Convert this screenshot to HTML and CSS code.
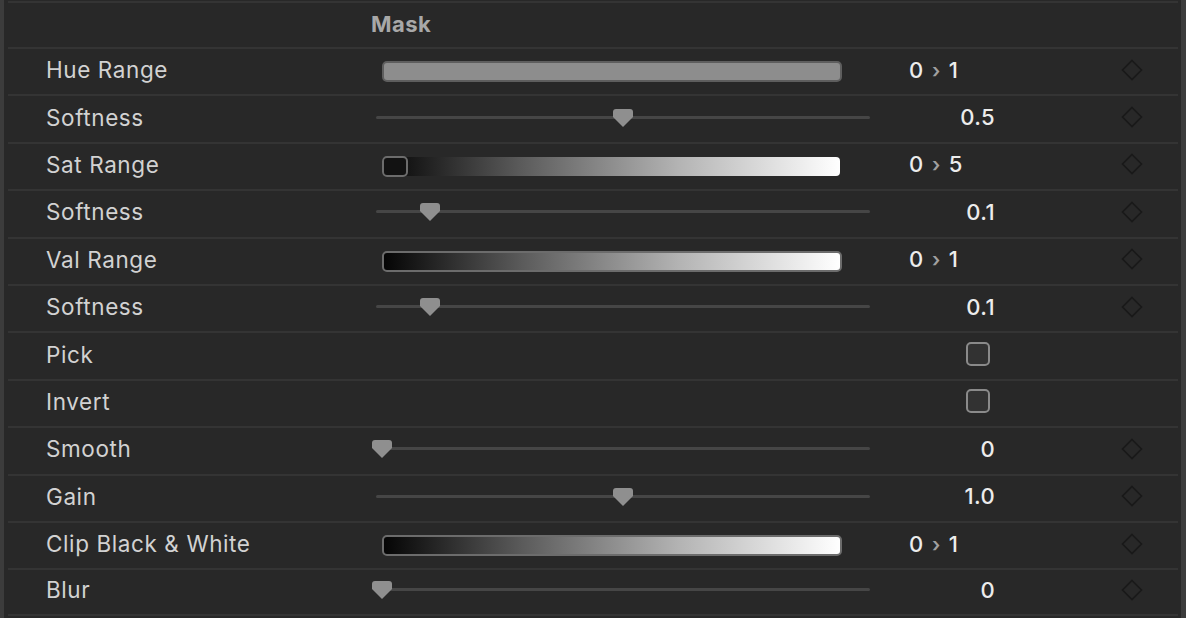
FILE: index.html
```html
<!DOCTYPE html>
<html lang="en">
<head>
    <meta charset="UTF-8">
    <title>Mask</title>
    <link rel="stylesheet" href="styles.css">
</head>
<body>

<div class="panel">
    <div class="header">Mask</div>

    <div class="row">
        <div class="label">Hue Range</div>
        <div class="control"><div class="range range-hue"></div></div>
        <div class="value range-value">0 <span class="arrow">›</span> 1</div>
        <div></div>
        <svg class="key" width="22" height="22" viewBox="0 0 22 22"><path d="M11 1.5 L20.5 11 L11 20.5 L1.5 11 Z"/></svg>
    </div>

    <div class="row">
        <div class="label">Softness</div>
        <div class="control">
            <div class="slider">
                <svg class="thumb" style="left: 237px" width="20" height="18" viewBox="0 0 20 18"><path d="M3 0 H17 Q20 0 20 3 V8 L10 18 L0 8 V3 Q0 0 3 0 Z"/></svg>
            </div>
        </div>
        <div class="value">0.5</div>
        <div></div>
        <svg class="key" width="22" height="22" viewBox="0 0 22 22"><path d="M11 1.5 L20.5 11 L11 20.5 L1.5 11 Z"/></svg>
    </div>

    <div class="row">
        <div class="label">Sat Range</div>
        <div class="control">
            <div class="range-sat">
                <div class="sat-strip"></div>
                <div class="sat-handle"></div>
            </div>
        </div>
        <div class="value range-value">0 <span class="arrow">›</span> 5</div>
        <div></div>
        <svg class="key" width="22" height="22" viewBox="0 0 22 22"><path d="M11 1.5 L20.5 11 L11 20.5 L1.5 11 Z"/></svg>
    </div>

    <div class="row">
        <div class="label">Softness</div>
        <div class="control">
            <div class="slider">
                <svg class="thumb" style="left: 44px" width="20" height="18" viewBox="0 0 20 18"><path d="M3 0 H17 Q20 0 20 3 V8 L10 18 L0 8 V3 Q0 0 3 0 Z"/></svg>
            </div>
        </div>
        <div class="value">0.1</div>
        <div></div>
        <svg class="key" width="22" height="22" viewBox="0 0 22 22"><path d="M11 1.5 L20.5 11 L11 20.5 L1.5 11 Z"/></svg>
    </div>

    <div class="row">
        <div class="label">Val Range</div>
        <div class="control"><div class="range range-grad"></div></div>
        <div class="value range-value">0 <span class="arrow">›</span> 1</div>
        <div></div>
        <svg class="key" width="22" height="22" viewBox="0 0 22 22"><path d="M11 1.5 L20.5 11 L11 20.5 L1.5 11 Z"/></svg>
    </div>

    <div class="row">
        <div class="label">Softness</div>
        <div class="control">
            <div class="slider">
                <svg class="thumb" style="left: 44px" width="20" height="18" viewBox="0 0 20 18"><path d="M3 0 H17 Q20 0 20 3 V8 L10 18 L0 8 V3 Q0 0 3 0 Z"/></svg>
            </div>
        </div>
        <div class="value">0.1</div>
        <div></div>
        <svg class="key" width="22" height="22" viewBox="0 0 22 22"><path d="M11 1.5 L20.5 11 L11 20.5 L1.5 11 Z"/></svg>
    </div>

    <div class="row">
        <div class="label">Pick</div>
        <div class="control"></div>
        <div class="value"><div class="checkbox"></div></div>
    </div>

    <div class="row">
        <div class="label">Invert</div>
        <div class="control"></div>
        <div class="value"><div class="checkbox"></div></div>
    </div>

    <div class="row">
        <div class="label">Smooth</div>
        <div class="control">
            <div class="slider">
                <svg class="thumb" style="left: -4px" width="20" height="18" viewBox="0 0 20 18"><path d="M3 0 H17 Q20 0 20 3 V8 L10 18 L0 8 V3 Q0 0 3 0 Z"/></svg>
            </div>
        </div>
        <div class="value">0</div>
        <div></div>
        <svg class="key" width="22" height="22" viewBox="0 0 22 22"><path d="M11 1.5 L20.5 11 L11 20.5 L1.5 11 Z"/></svg>
    </div>

    <div class="row">
        <div class="label">Gain</div>
        <div class="control">
            <div class="slider">
                <svg class="thumb" style="left: 237px" width="20" height="18" viewBox="0 0 20 18"><path d="M3 0 H17 Q20 0 20 3 V8 L10 18 L0 8 V3 Q0 0 3 0 Z"/></svg>
            </div>
        </div>
        <div class="value">1.0</div>
        <div></div>
        <svg class="key" width="22" height="22" viewBox="0 0 22 22"><path d="M11 1.5 L20.5 11 L11 20.5 L1.5 11 Z"/></svg>
    </div>

    <div class="row">
        <div class="label">Clip Black &amp; White</div>
        <div class="control"><div class="range range-grad"></div></div>
        <div class="value range-value">0 <span class="arrow">›</span> 1</div>
        <div></div>
        <svg class="key" width="22" height="22" viewBox="0 0 22 22"><path d="M11 1.5 L20.5 11 L11 20.5 L1.5 11 Z"/></svg>
    </div>

    <div class="row last">
        <div class="label">Blur</div>
        <div class="control">
            <div class="slider">
                <svg class="thumb" style="left: -4px" width="20" height="18" viewBox="0 0 20 18"><path d="M3 0 H17 Q20 0 20 3 V8 L10 18 L0 8 V3 Q0 0 3 0 Z"/></svg>
            </div>
        </div>
        <div class="value">0</div>
        <div></div>
        <svg class="key" width="22" height="22" viewBox="0 0 22 22"><path d="M11 1.5 L20.5 11 L11 20.5 L1.5 11 Z"/></svg>
    </div>
</div>

</body>
</html>
```

FILE: styles.css
```css
body {
    margin: 0;
    background-color: #3c3c3c;
    font-family: Inter, "Noto Sans", sans-serif;
    overflow: hidden;
}
.panel {
    margin: 0 5px 0 4px;
    height: 618px;
    padding: 1px 3px 0 4px;
    box-sizing: border-box;
    background-color: #282828;
}
.header {
    height: 46px;
    box-sizing: border-box;
    border-top: 2px solid #343434;
    padding: 0 0 3px 363px;
    display: flex;
    align-items: center;
    color: #a8a8a8;
    font-size: 22px;
    font-weight: 700;
    letter-spacing: 0.5px;
}
.row {
    height: 47.4px;
    box-sizing: border-box;
    border-top: 2px solid #343434;
    padding: 0 35px 0 38px;
    display: grid;
    grid-template-columns: 330px 494px 125px 1fr 22px;
    align-items: center;
}
.row.last {
    border-bottom: 2px solid #343434;
}
.label {
    margin-bottom: 4px;
    color: #d2d2d2;
    font-size: 22.5px;
    letter-spacing: 0.6px;
}
.control {
    display: flex;
    align-items: center;
}
.value {
    justify-self: end;
    margin-bottom: 4px;
    color: #ececec;
    font-size: 22px;
    font-weight: 500;
    letter-spacing: 0.4px;
}
.range-value {
    justify-self: start;
    padding-left: 39px;
}
.arrow {
    color: #a0a0a0;
    font-size: 20px;
    font-weight: 600;
    margin: 0 2px;
}
.key {
    display: block;
    margin-bottom: 4px;
}
.key path {
    fill: none;
    stroke: #191919;
    stroke-width: 1.6;
}

/* range bars */
.range {
    margin-left: 6px;
    width: 460px;
    height: 21px;
    box-sizing: border-box;
    border: 2px solid #5e5e5e;
    border-radius: 5px;
}
.range-hue {
    background-color: #8d8d8d;
}
.range-grad {
    border-color: #6c6c6c;
    background: linear-gradient(to right, #050505, #5a5a5a 30%, #b4b4b4 65%, #ffffff);
}
.range-sat {
    position: relative;
    margin-left: 6px;
    width: 458px;
    height: 21px;
}
.sat-strip {
    position: absolute;
    top: 1px;
    bottom: 1px;
    left: 0;
    right: 0;
    border-radius: 4px;
    background: linear-gradient(to right, #050505, #5a5a5a 30%, #b4b4b4 65%, #ffffff);
}
.sat-handle {
    position: absolute;
    top: 0;
    left: 0;
    width: 26px;
    height: 21px;
    box-sizing: border-box;
    border: 2px solid #6c6c6c;
    border-radius: 5px;
    background-color: #121212;
}

/* sliders */
.slider {
    position: relative;
    width: 494px;
    height: 3px;
    margin-bottom: 4px;
    border-radius: 2px;
    background-color: #464646;
}
.thumb {
    position: absolute;
    top: -7px;
}
.thumb path {
    fill: #8f8f8f;
}

.checkbox {
    width: 24px;
    height: 24px;
    margin: 0 5px 0 0;
    box-sizing: border-box;
    border: 2px solid #8a8a8a;
    border-radius: 5px;
    background-color: #323232;
}
```
